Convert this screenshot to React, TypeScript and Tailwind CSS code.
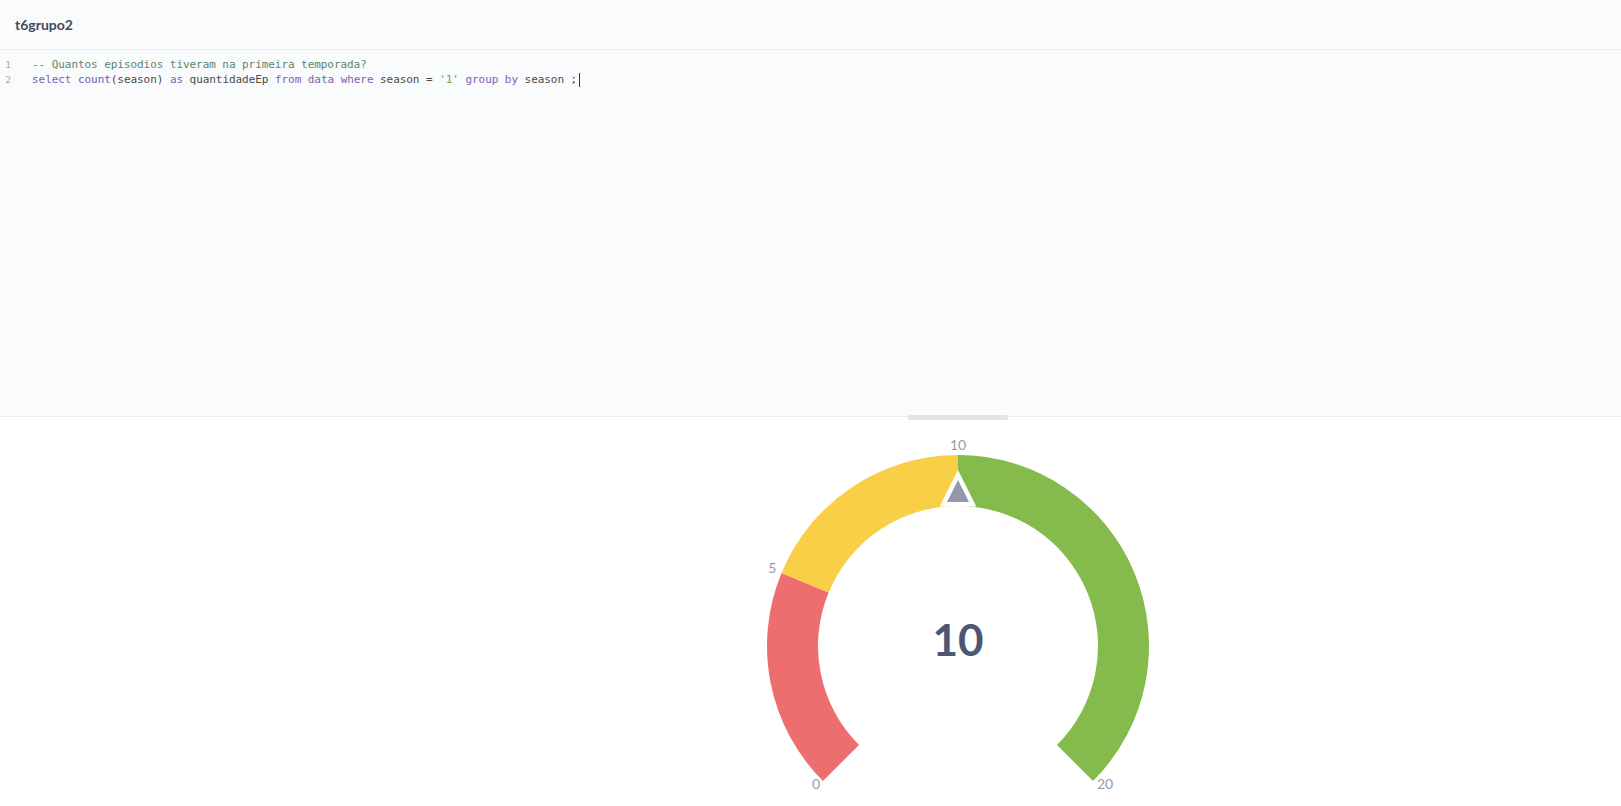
import React from "react";

const CX = 958;
const CY = 229;
const R_OUT = 191;
const R_IN = 140;

function pt(v: number, r: number) {
  const a = ((-135 + (270 * v) / 20) * Math.PI) / 180;
  return [CX + r * Math.sin(a), CY - r * Math.cos(a)];
}

function arcPath(from: number, to: number) {
  const [x1, y1] = pt(from, R_OUT);
  const [x2, y2] = pt(to, R_OUT);
  const [x3, y3] = pt(to, R_IN);
  const [x4, y4] = pt(from, R_IN);
  const large = ((to - from) / 20) * 270 > 180 ? 1 : 0;
  return `M${x1} ${y1} A${R_OUT} ${R_OUT} 0 ${large} 1 ${x2} ${y2} L${x3} ${y3} A${R_IN} ${R_IN} 0 ${large} 0 ${x4} ${y4} Z`;
}

const segments = [
  { from: 0, to: 5, color: "#ED6E6E" },
  { from: 5, to: 10, color: "#F9CF48" },
  { from: 10, to: 20, color: "#84BB4C" },
];

const [l5x, l5y] = pt(5, 201);
const [l10x, l10y] = pt(10, 201);
const labels = [
  { v: 0, x: 816, y: 367 },
  { v: 5, x: l5x, y: l5y - 1 },
  { v: 10, x: l10x, y: l10y },
  { v: 20, x: 1105, y: 367 },
];

const kw = "text-[#7f5fb3]";
const plain = "text-[#4a4a4a]";

function Gauge() {
  return (
    <svg width={1621} height={389} viewBox="0 0 1621 389" className="block">
      {segments.map((s) => (
        <path key={s.from} d={arcPath(s.from, s.to)} fill={s.color} />
      ))}
      <polygon
        points={`${CX},${CY - 166} ${CX - 11},${CY - 144} ${CX + 11},${CY - 144}`}
        fill="#9598AB"
        stroke="#ffffff"
        strokeWidth={9}
        strokeLinejoin="miter"
        paintOrder="stroke"
      />
      {labels.map((l) => (
        <text
          key={l.v}
          x={l.x}
          y={l.y + 5}
          textAnchor="middle"
          fontSize={14}
          fill="#959BAD"
          style={{ fontFamily: "Lato, sans-serif" }}
        >
          {l.v}
        </text>
      ))}
      <text
        x={CX}
        y={CY + 10}
        textAnchor="middle"
        fontSize={44}
        fontWeight={700}
        fill="#4C5773"
        style={{ fontFamily: "Lato, sans-serif" }}
      >
        10
      </text>
    </svg>
  );
}

export default function App() {
  return (
    <div className="w-[1621px] h-[806px] flex flex-col bg-white overflow-hidden font-['Lato',sans-serif]">
      <div className="h-[50px] shrink-0 border-b border-[#eceff1] bg-[#f9fbfc] flex items-center px-[15px]">
        <h1 className="text-[14px] font-bold text-[#3f4a5e] leading-none pt-px">t6grupo2</h1>
      </div>

      <div className="h-[367px] shrink-0 bg-[#f9fbfc] border-b border-[#eaedef] pt-[7px] font-['DejaVu_Sans_Mono',monospace] text-[11px] leading-[15px] tracking-[-0.06px]">
        <div className="flex items-baseline">
          <span className="w-[11px] text-right text-[#a8a8a8] text-[9.5px]">1</span>
          <span className="ml-[21px] text-[#5b8569] whitespace-pre">-- Quantos episodios tiveram na primeira temporada?</span>
        </div>
        <div className="flex items-baseline">
          <span className="w-[11px] text-right text-[#a8a8a8] text-[9.5px]">2</span>
          <span className="ml-[21px] whitespace-pre">
            <span className={kw}>select</span>{" "}
            <span className="text-[#6b57c2]">count</span>
            <span className={plain}>(season)</span>{" "}
            <span className={kw}>as</span>{" "}
            <span className={plain}>quantidadeEp</span>{" "}
            <span className={kw}>from</span>{" "}
            <span className={kw}>data</span>{" "}
            <span className={kw}>where</span>{" "}
            <span className={plain}>season</span>{" "}
            <span className={plain}>=</span>{" "}
            <span className="text-[#6ea34d]">'1'</span>{" "}
            <span className={kw}>group</span>{" "}
            <span className={kw}>by</span>{" "}
            <span className={plain}>season</span>{" "}
            <span className={plain}>;</span>
            <span className="inline-block w-px h-[14px] bg-[#333] ml-[2px] align-middle" />
          </span>
        </div>
      </div>

      <div className="relative flex-1">
        <div className="absolute left-[908px] top-[-2px] w-[100px] h-[5px] rounded-full bg-[#e4e4e6]" />
        <Gauge />
      </div>
    </div>
  );
}
